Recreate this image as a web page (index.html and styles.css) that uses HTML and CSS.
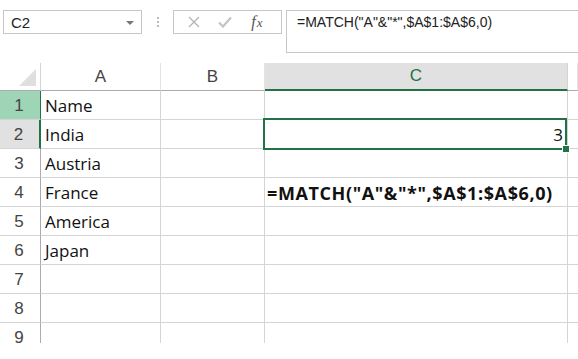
FILE: index.html
```html
<!DOCTYPE html>
<html lang="en">
<head>
  <meta charset="UTF-8">
  <title>MATCH wildcard</title>
  <link rel="stylesheet" href="styles.css">
</head>
<body>

  <div id="toolbar">
    <div id="name-box">
      <span>C2</span>
      <span class="caret"></span>
    </div>
    <div class="grip"><i></i><i></i><i></i></div>
    <div id="fx-box">
      <span class="fx-btn">
        <svg width="12" height="12" viewBox="0 0 12 12"><path d="M1 1L11 11M11 1L1 11" stroke="#b4b4b4" stroke-width="1.3" fill="none"/></svg>
      </span>
      <span class="fx-btn">
        <svg width="14" height="12" viewBox="0 0 14 12"><path d="M1 6.5L5 10.5L13 1.5" stroke="#c4c4c4" stroke-width="2.2" fill="none"/></svg>
      </span>
      <span class="fx-btn fx">f<span class="x">x</span></span>
    </div>
    <div id="formula-box">=MATCH("A"&amp;"*",$A$1:$A$6,0)</div>
  </div>

  <div id="sheet">
    <div class="grid">
      <div class="corner"><span class="tri"></span></div>
      <div class="colhead">A</div>
      <div class="colhead">B</div>
      <div class="colhead active">C</div>
      <div class="colhead last"></div>

      <div class="rowhead hl">1</div><div class="cell">Name</div><div class="cell"></div><div class="cell"></div><div class="cell last"></div>
      <div class="rowhead sel">2</div><div class="cell">India</div><div class="cell"></div><div class="cell num">3</div><div class="cell last"></div>
      <div class="rowhead">3</div><div class="cell">Austria</div><div class="cell"></div><div class="cell"></div><div class="cell last"></div>
      <div class="rowhead">4</div><div class="cell">France</div><div class="cell"></div><div class="cell bold">=MATCH("A"&amp;"*",$A$1:$A$6,0)</div><div class="cell last"></div>
      <div class="rowhead">5</div><div class="cell">America</div><div class="cell"></div><div class="cell"></div><div class="cell last"></div>
      <div class="rowhead">6</div><div class="cell">Japan</div><div class="cell"></div><div class="cell"></div><div class="cell last"></div>
      <div class="rowhead">7</div><div class="cell"></div><div class="cell"></div><div class="cell"></div><div class="cell last"></div>
      <div class="rowhead">8</div><div class="cell"></div><div class="cell"></div><div class="cell"></div><div class="cell last"></div>
      <div class="rowhead">9</div><div class="cell"></div><div class="cell"></div><div class="cell"></div><div class="cell last"></div>
    </div>
    <div class="selection"><span class="handle"></span></div>
  </div>

</body>
</html>
```

FILE: styles.css
```css
:root {
  --green: #217346;
  --grid-line: #d4d4d4;
  --head-line: #ababab;
  --box-border: #c6c6c6;
  --head-text: #444;
}

body {
  margin: 0;
  background: #fff;
  font-family: 'Liberation Sans', Arial, sans-serif;
  width: 578px;
  height: 359px;
  overflow: hidden;
}

/* formula bar */
#toolbar {
  display: flex;
  align-items: flex-start;
  height: 63px;
  padding: 10px 0 0 3px;
  box-sizing: border-box;
}

#name-box {
  width: 139px;
  height: 24px;
  box-sizing: border-box;
  border: 1px solid var(--box-border);
  display: flex;
  align-items: center;
  justify-content: space-between;
  padding: 0 7px 0 7px;
  font-size: 15px;
  color: #222;
}

.caret {
  width: 0;
  height: 0;
  border-left: 4px solid transparent;
  border-right: 4px solid transparent;
  border-top: 4px solid #777;
  margin-top: 2px;
}

.grip {
  width: 31px;
  height: 24px;
  display: flex;
  flex-direction: column;
  align-items: center;
  justify-content: center;
  gap: 2px;
}

.grip i {
  width: 2px;
  height: 2px;
  background: #bbb;
}

#fx-box {
  width: 109px;
  height: 24px;
  box-sizing: border-box;
  border: 1px solid var(--box-border);
  display: flex;
  align-items: center;
  padding-left: 14px;
}

.fx-btn {
  width: 35px;
  display: flex;
  align-items: center;
}

.fx {
  font-family: 'Liberation Serif', serif;
  font-style: italic;
  font-size: 16px;
  color: #555;
  padding-left: 4px;
  align-items: baseline;
}

.fx .x {
  font-size: 13px;
  margin-left: 1px;
}

#formula-box {
  flex: 1;
  height: 43px;
  margin-left: 4px;
  box-sizing: border-box;
  border: 1px solid var(--box-border);
  border-right: none;
  padding: 3px 0 0 10px;
  font-size: 14px;
  color: #222;
}

/* sheet */
#sheet {
  position: relative;
  height: 280px;
  overflow: hidden;
}

.grid {
  display: grid;
  grid-template-columns: 41px 120px 104px 303px 1fr;
  grid-template-rows: 28px repeat(9, 29px);
}

.corner {
  position: relative;
  border-right: 1px solid var(--grid-line);
  border-bottom: 1px solid var(--head-line);
}

.tri {
  position: absolute;
  right: 4px;
  bottom: 4px;
  width: 0;
  height: 0;
  border-left: 17px solid transparent;
  border-bottom: 17px solid #dfdfdf;
}

.colhead {
  border-right: 1px solid #e3e3e3;
  border-bottom: 1px solid var(--head-line);
  font-size: 17px;
  color: var(--head-text);
  text-align: center;
  line-height: 27px;
}

.colhead.active {
  background: #e1e1e1;
  color: var(--green);
  border-bottom: 2px solid var(--green);
  border-right-color: var(--grid-line);
  line-height: 26px;
}

.rowhead {
  border-right: 1px solid var(--head-line);
  border-bottom: 1px solid var(--grid-line);
  font-size: 17px;
  color: var(--head-text);
  text-align: center;
  line-height: 30px;
  padding-right: 2px;
}

.rowhead.hl {
  background: #9fd5b7;
  border-right-color: var(--green);
}

.rowhead.sel {
  background: #e1e1e1;
  border-right: 2px solid var(--green);
}

.cell {
  border-right: 1px solid var(--grid-line);
  border-bottom: 1px solid var(--grid-line);
  font-family: 'Open Sans', Lato, sans-serif;
  font-size: 17px;
  color: #111;
  line-height: 30px;
  padding-left: 4px;
  white-space: nowrap;
}

.cell.last {
  border-right: none;
}

.cell.num {
  text-align: right;
  padding-right: 4px;
}

.cell.bold {
  font-weight: bold;
  font-size: 18px;
  padding-left: 2px;
  letter-spacing: 0.6px;
}

.selection {
  position: absolute;
  left: 263px;
  top: 55px;
  width: 304px;
  height: 32px;
  box-sizing: border-box;
  border: 2px solid var(--green);
}

.handle {
  position: absolute;
  right: -5px;
  bottom: -5px;
  width: 6px;
  height: 6px;
  background: var(--green);
  border: 1px solid #fff;
}
```
